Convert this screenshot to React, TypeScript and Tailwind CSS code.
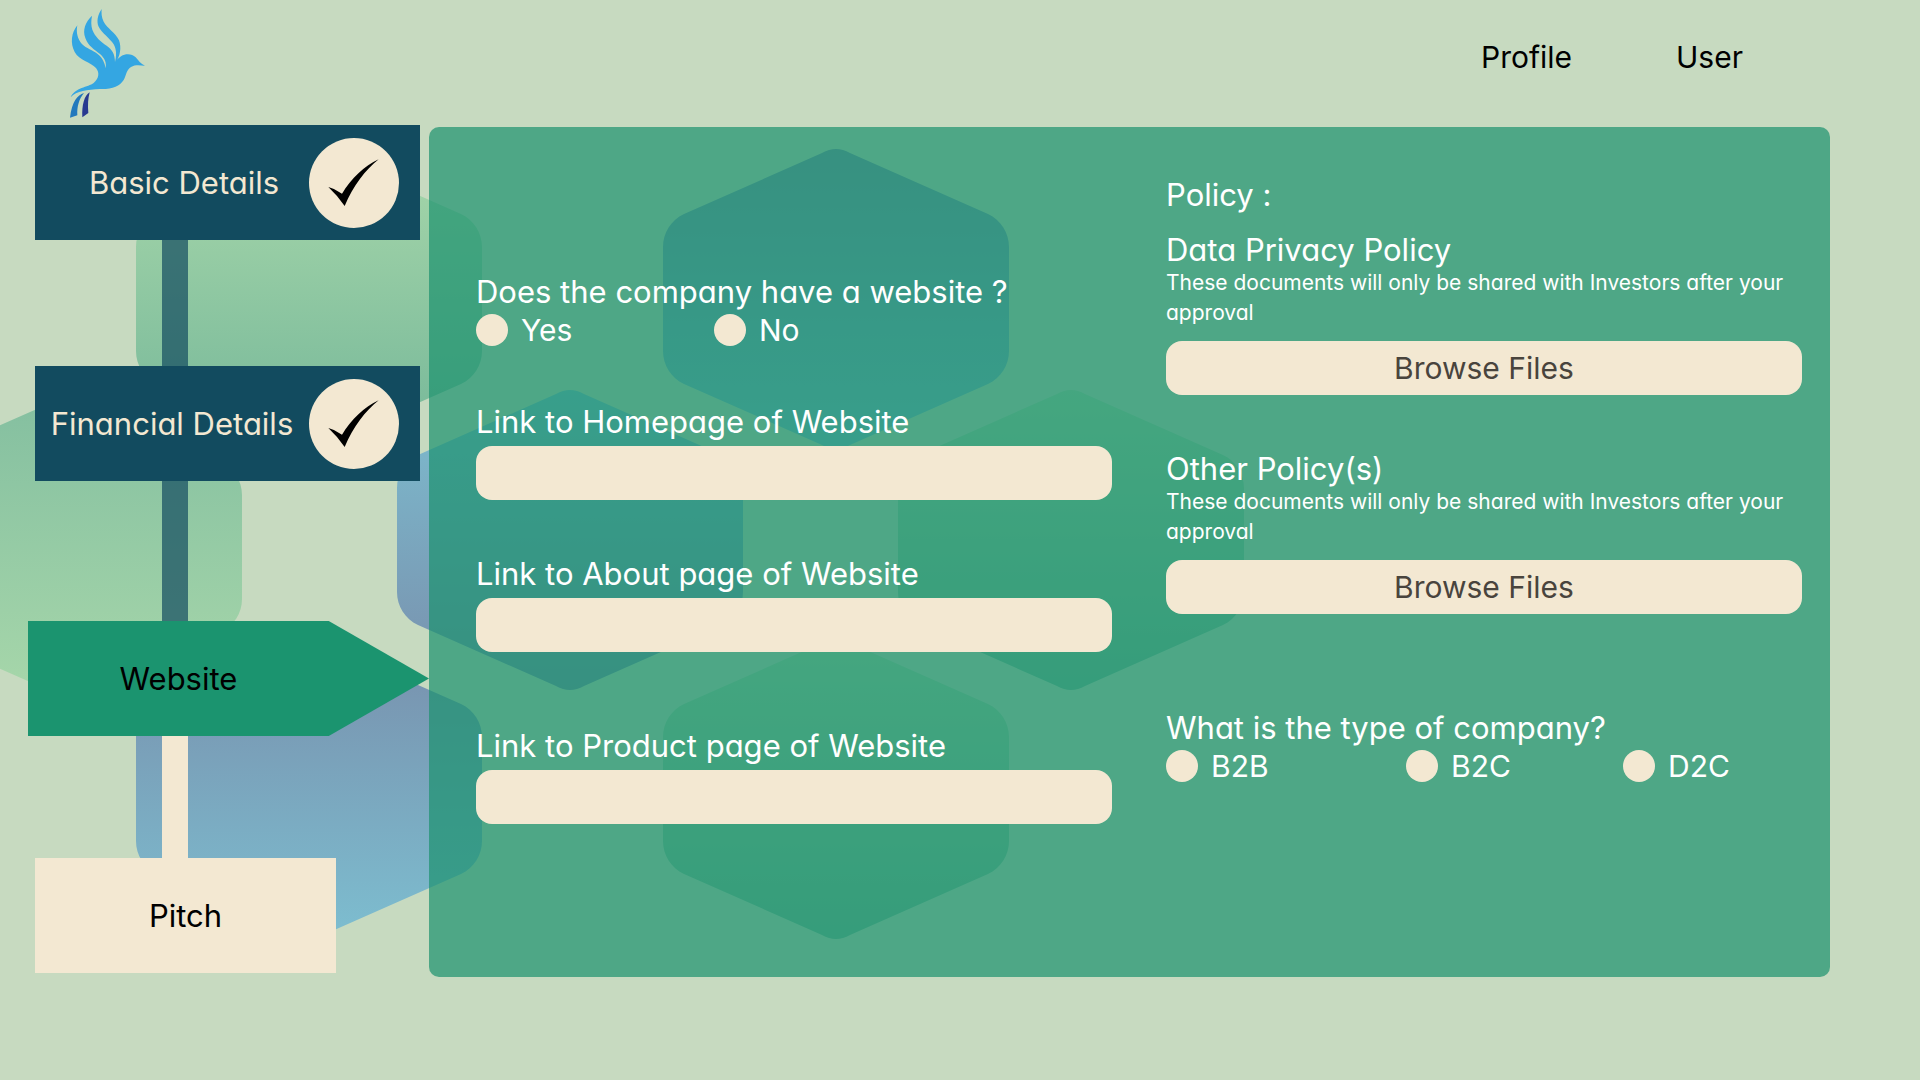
import React from "react";

const HEX_PATH =
  "M159 4 Q173 -4 187 4 L325 65 C338 71 346 84 346 98 L346 202 C346 216 338 229 325 235 L187 296 Q173 304 159 296 L21 235 C8 229 0 216 0 202 L0 98 C0 84 8 71 21 65 Z";

const hexagons = [
  { x: 136, y: 149, fill: "greenDown" },
  { x: 663, y: 149, fill: "blueDown" },
  { x: -104, y: 397, fill: "greenUp" },
  { x: 397, y: 390, fill: "blueUp" },
  { x: 898, y: 390, fill: "greenDown" },
  { x: 136, y: 639, fill: "blueDown" },
  { x: 663, y: 639, fill: "greenDown" },
];

function Gradient({ id, from, to }: { id: string; from: string; to: string }) {
  return (
    <linearGradient id={id} x1="0" y1="0" x2="0" y2="1">
      <stop offset="0" stopColor={from} />
      <stop offset="1" stopColor={to} />
    </linearGradient>
  );
}

function Backdrop() {
  return (
    <svg
      className="pointer-events-none absolute top-0 left-0"
      width="1920"
      height="1080"
      viewBox="0 0 1920 1080"
      aria-hidden="true"
    >
      <defs>
        <Gradient id="greenDown" from="#a7d7aa" to="#75b799" />
        <Gradient id="greenUp" from="#84bfa0" to="#a7d7aa" />
        <Gradient id="blueDown" from="#788fac" to="#7dbed0" />
        <Gradient id="blueUp" from="#7dbed0" to="#788fac" />
      </defs>
      {hexagons.map((h) => (
        <path
          key={`${h.x}-${h.y}`}
          d={HEX_PATH}
          transform={`translate(${h.x} ${h.y})`}
          fill={`url(#${h.fill})`}
        />
      ))}
    </svg>
  );
}

function BirdLogo() {
  return (
    <svg width="110" height="125" viewBox="0 0 330 375" role="img" aria-label="Home">
      <path
        fill="#34a6e2"
        d="M82 76 C64 98 60 130 74 156 C88 182 122 186 138 204 C150 219 146 236 131 249 C114 262 75 262 62 292 C80 272 112 270 150 267 C187 268 209 259 221 240 C230 225 228 211 243 201 C256 193 270 196 285 197 C272 192 265 181 257 172 C241 156 211 160 196 187 C211 170 215 143 207 121 C196 97 172 86 161 65 C154 51 154 38 155 27 C143 44 139 65 146 80 C155 99 180 114 191 133 C201 150 199 172 195 186 C195 162 186 148 170 137 C152 125 135 110 127 89 C123 76 123 62 126 47 C106 66 97 90 106 114 C114 138 134 149 150 162 C164 174 170 188 167 205 C165 187 154 168 138 158 C121 147 103 143 91 126 C80 109 79 92 82 76 Z"
      />
      <path fill="#2179bd" d="M102 279 C82 285 66 304 60 353 L82 346 C80 320 88 295 102 279 Z" />
      <path fill="#283a90" d="M119 277 C103 286 95 316 97 352 L115 339 C113 315 114 295 119 277 Z" />
    </svg>
  );
}

function CheckBadge() {
  return (
    <svg className="shrink-0" width="90" height="90" viewBox="27 24 270 270" role="img" aria-label="Completed">
      <circle cx="162" cy="159" r="135" fill="#f3e8d2" />
      <path d="M85 171 Q106 176 126 191 C154 145 193 108 236 88 C196 120 160 167 134 228 Q112 196 85 171 Z" fill="#000" />
    </svg>
  );
}

function DoneStep({ label, className }: { label: string; className?: string }) {
  return (
    <a href="#" className="ml-[7px] flex h-[115px] w-[385px] items-center bg-[#124b5f] pr-[21px] text-[#f3e8d2]">
      <span className={`flex-1 text-center whitespace-nowrap ${className ?? ""}`}>{label}</span>
      <CheckBadge />
    </a>
  );
}

function TextField({ id, label, className }: { id: string; label: string; className: string }) {
  return (
    <div className={className}>
      <label htmlFor={id} className="block">
        {label}
      </label>
      <input
        id={id}
        type="url"
        className="mt-1.5 block h-[54px] w-full rounded-2xl bg-[#f3e8d2] px-5 text-xl text-[#49443d] outline-none"
      />
    </div>
  );
}

function RadioOption({ name, label, className }: { name: string; label: string; className?: string }) {
  return (
    <label className={`flex h-8 items-center gap-[13px] text-[30px] ${className ?? ""}`}>
      <input
        type="radio"
        name={name}
        className="size-8 shrink-0 appearance-none rounded-full bg-[#f3e8d2] checked:border-8 checked:border-[#124b5f]"
      />
      <span>{label}</span>
    </label>
  );
}

function FileField({ title, className }: { title: string; className: string }) {
  return (
    <div className={className}>
      <h3>{title}</h3>
      <p className="text-[21px] leading-[30px]">
        These documents will only be shared with Investors after your approval
      </p>
      <button
        type="button"
        className="mt-[13px] block h-[54px] w-full rounded-2xl bg-[#f3e8d2] text-[30px] text-[#49443d]"
      >
        Browse Files
      </button>
    </div>
  );
}

export default function App() {
  return (
    <div className="relative min-h-screen overflow-hidden bg-[#c7dac0] pb-24 font-['Inter',sans-serif] text-[31px] leading-[36px] font-normal text-black [font-feature-settings:'cv11']">
      <Backdrop />

      <header className="relative flex h-[125px] items-start justify-between pr-[177px] pl-[50px]">
        <a href="#">
          <BirdLogo />
        </a>
        <nav className="flex gap-[104px] pt-[39px] text-[30px]">
          <a href="#">Profile</a>
          <a href="#">User</a>
        </nav>
      </header>

      <div className="relative flex items-start pr-[90px] pl-7">
        <nav className="flex w-[401px] shrink-0 flex-col" aria-label="Steps">
          <DoneStep label="Basic Details" className="pl-6" />
          <div className="ml-[134px] h-[126px] w-[26px] bg-[#124b5f]/70" />
          <DoneStep label="Financial Details" />
          <div className="ml-[134px] h-[140px] w-[26px] bg-[#124b5f]/70" />
          <a
            href="#"
            aria-current="step"
            className="flex h-[115px] items-center justify-center bg-[#1b946f] pr-[100px] [clip-path:polygon(0_0,75%_0,100%_50%,75%_100%,0_100%)]"
          >
            Website
          </a>
          <div className="ml-[134px] h-[122px] w-[26px] bg-[#f3e8d2]" />
          <a href="#" className="ml-[7px] flex h-[115px] w-[301px] items-center justify-center bg-[#f3e8d2]">
            Pitch
          </a>
        </nav>

        <form className="mt-0.5 grid flex-1 grid-cols-2 gap-[54px] rounded-[10px] bg-[#1b926e]/70 pt-[50px] pr-7 pb-[153px] pl-[47px] text-white">
          <div className="pt-[97px]">
            <fieldset>
              <legend className="whitespace-nowrap">Does the company have a website ?</legend>
              <div className="mt-1 flex">
                <RadioOption name="has-website" label="Yes" className="w-[238px]" />
                <RadioOption name="has-website" label="No" />
              </div>
            </fieldset>
            <TextField id="homepage" label="Link to Homepage of Website" className="mt-[58px]" />
            <TextField id="about" label="Link to About page of Website" className="mt-14" />
            <TextField id="product" label="Link to Product page of Website" className="mt-[76px]" />
          </div>

          <div>
            <h2>Policy :</h2>
            <FileField title="Data Privacy Policy" className="mt-[19px]" />
            <FileField title="Other Policy(s)" className="mt-14" />
            <fieldset className="mt-24">
              <legend className="whitespace-nowrap">What is the type of company?</legend>
              <div className="mt-1 flex">
                <RadioOption name="company-type" label="B2B" className="w-[240px]" />
                <RadioOption name="company-type" label="B2C" className="w-[217px]" />
                <RadioOption name="company-type" label="D2C" />
              </div>
            </fieldset>
          </div>
        </form>
      </div>
    </div>
  );
}
